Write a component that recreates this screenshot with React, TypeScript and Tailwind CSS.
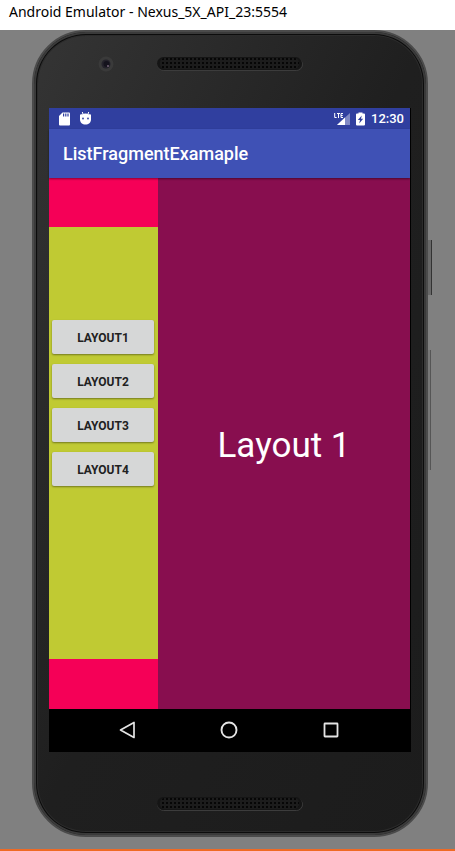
import { useState } from "react";

const layouts = ["Layout1", "Layout2", "Layout3", "Layout4"];

function Speaker({ id }: { id: string }) {
  return (
    <svg className="mx-auto block h-[14px] w-[146px]" viewBox="0 0 146 14" aria-hidden="true">
      <defs>
        <pattern id={id} width="4" height="4" patternUnits="userSpaceOnUse">
          <rect width="4" height="4" fill="#1c1c1c" />
          <rect x="1" y="1" width="2" height="2" fill="#060606" />
        </pattern>
      </defs>
      <rect x="0.5" y="1.5" width="145" height="12" rx="6" fill="none" stroke="#3c3c3c" />
      <rect x="0" y="0" width="145" height="13" rx="6.5" fill="#151515" />
      <rect x="3" y="1" width="139" height="11" rx="5" fill={`url(#${id})`} />
    </svg>
  );
}

function StatusBar() {
  return (
    <div className="mr-px flex h-[21px] items-center bg-[#303f9f] pr-[6px] pl-[10px] text-white">
      <svg className="h-[14px] w-[11px]" viewBox="0 0 11 14" aria-hidden="true">
        <path d="M3.5 .5H10a1 1 0 0 1 1 1v11a1 1 0 0 1-1 1H1a1 1 0 0 1-1-1V4z" fill="#fff" />
        <path d="M4 1.5h1.2v3H4zM6.2 1.5h1.2v3H6.2zM8.4 1.5h1.2v3H8.4z" fill="#303f9f" />
      </svg>
      <svg className="ml-[10px] h-[14px] w-[11px]" viewBox="0 0 11 14" aria-hidden="true">
        <path d="M2.3 0 3.3 3M8.7 0 7.7 3" stroke="#fff" strokeWidth="1" />
        <path d="M0 3l1-1 1 .5C4 1.200 7 1.200 9 2.500l1-.5 1 1v4.500c0 3-2.400 5-5.500 5S0 10.500 0 7.500z" fill="#fff" />
        <circle cx="3" cy="6.500" r=".9" fill="#303f9f" />
        <circle cx="8" cy="6.500" r=".9" fill="#303f9f" />
      </svg>
      <div className="ml-auto flex items-center">
        <svg className="h-[14px] w-4" viewBox="0 0 16 14" aria-label="LTE signal">
          <path d="M16 1v12H3z" fill="#8089c5" />
          <path d="M11 5.600V13H3z" fill="#fff" />
          <path d="M0 0h9v7H0z" fill="#303f9f" />
          <path d="M.7 1v4.500h2M3 1.500h3M4.500 1.500V6M9 1.500H7v4h2M7 3.500h1.700" fill="none" stroke="#fff" strokeWidth="1" />
        </svg>
        <svg className="ml-[6px] h-[14px] w-[9px]" viewBox="0 0 9 14" aria-label="Battery charging">
          <path d="M2.500 .5h4v1H8a1 1 0 0 1 1 1v10a1 1 0 0 1-1 1H1a1 1 0 0 1-1-1v-10a1 1 0 0 1 1-1h1.500z" fill="#fff" />
          <path d="M5.800 3.500 1.800 8h2.200L3.200 11.500 7.200 6.800H5z" fill="#303f9f" />
        </svg>
        <span className="ml-[6px] text-[13px] leading-5 font-medium">12:30</span>
      </div>
    </div>
  );
}

function NavBar() {
  return (
    <nav className="flex h-[43px] items-center justify-center gap-[78px] bg-black pr-0.5 pb-0.5">
      <button aria-label="Back" className="size-6">
        <svg viewBox="0 0 24 24" fill="none" stroke="#e4e4e4" strokeWidth="1.700" strokeLinejoin="round">
          <path d="M19 4.500v15L5.500 12z" />
        </svg>
      </button>
      <button aria-label="Home" className="size-6">
        <svg viewBox="0 0 24 24" fill="none" stroke="#e4e4e4" strokeWidth="1.900">
          <circle cx="12" cy="12" r="7.500" />
        </svg>
      </button>
      <button aria-label="Overview" className="size-6">
        <svg viewBox="0 0 24 24" fill="none" stroke="#e4e4e4" strokeWidth="1.800" strokeLinejoin="round">
          <rect x="5.500" y="5.500" width="13" height="13" rx=".5" />
        </svg>
      </button>
    </nav>
  );
}

export default function App() {
  const [selected, setSelected] = useState(1);

  return (
    <div className="flex min-h-screen flex-col border-b-2 border-[#ef6a24] bg-[#808080] font-[Roboto,sans-serif]">
      <header className="h-[30px] bg-white pl-[9px] font-['Noto_Sans',sans-serif] text-[14px] leading-6 text-black">
        Android Emulator - Nexus_5X_API_23:5554
      </header>

      <main className="flex flex-1 flex-col pr-[27px] pb-3 pl-8">
        <div className="relative flex flex-1 flex-col rounded-[54px] border-2 border-[#4b4b4b] bg-linear-to-br from-[#353535] via-[#1f1f1f] via-50% to-[#1c1c1c] bg-origin-border px-[15px] shadow-[inset_0_0_0_2px_#3a3a3a,inset_0_0_0_3px_#0c0c0c,inset_0_0_0_4px_#2b2b2b]">
          <div className="absolute top-[208px] -right-[6px] h-[55px] w-1 border-r border-[#333] bg-[#686868]" />
          <div className="absolute top-[318px] -right-[5px] h-[120px] w-[3px] border-r border-[#555] bg-[#777]" />

          <div className="grid h-[76px] grid-cols-[1fr_146px_1fr] items-center pb-3">
            <svg className="ml-[49px] size-4" viewBox="0 0 16 16" aria-hidden="true">
              <circle cx="8" cy="8" r="7.500" fill="#3a3a3a" />
              <circle cx="8" cy="8" r="4.500" fill="#24222b" />
              <circle cx="8.500" cy="8" r="3" fill="#15131d" />
              <circle cx="10" cy="10" r="1" fill="#77667a" />
            </svg>
            <Speaker id="earpiece" />
          </div>

          <section className="flex flex-1 flex-col bg-black">
            <StatusBar />
            <div className="z-10 mr-px flex h-[49px] items-center bg-[#3f51b5] px-[14px] shadow-[0_1px_2px_rgba(0,0,0,0.45)]">
              <h1 className="text-lg font-medium text-white">ListFragmentExamaple</h1>
            </div>
            <div className="mr-px flex flex-1">
              <div className="flex w-[30.2%] flex-col bg-[#f50057] pt-[49px] pb-[50px]">
                <div className="flex flex-1 flex-col justify-center gap-[10px] bg-[#c0ca33] pr-1 pb-[80px] pl-[3px]">
                  {layouts.map((name, index) => (
                    <button
                      key={name}
                      onClick={() => setSelected(index + 1)}
                      className="h-[34px] rounded-xs bg-[#d6d7d7] pt-0.5 text-xs font-bold text-[#212121] uppercase shadow-[0_1px_2px_rgba(0,0,0,0.4)]"
                    >
                      {name}
                    </button>
                  ))}
                </div>
              </div>
              <div className="flex flex-1 items-center justify-center bg-[#880e4f] pt-1">
                <p className="text-[35px] leading-10 text-white">Layout {selected}</p>
              </div>
            </div>
            <NavBar />
          </section>

          <div className="h-[83px] pt-[45px]">
            <Speaker id="loudspeaker" />
          </div>
        </div>
      </main>
    </div>
  );
}
